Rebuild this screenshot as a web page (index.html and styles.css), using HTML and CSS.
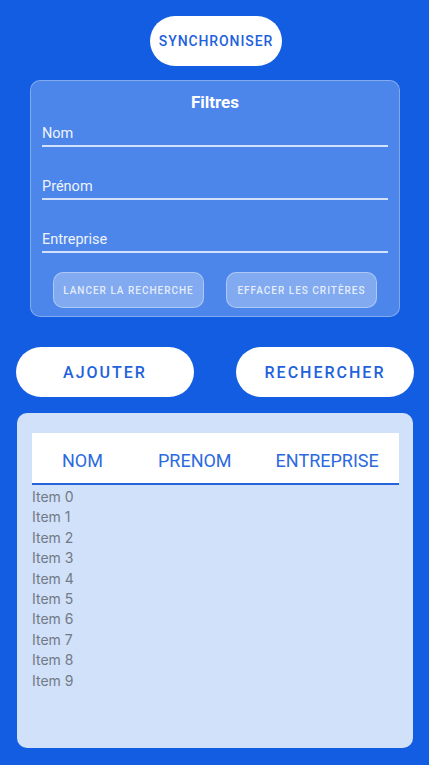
FILE: index.html
```html
<!DOCTYPE html>
<html>
<head>
<meta charset="utf-8">
<link rel="stylesheet" href="styles.css">
</head>
<body>
<div class="page">
  <div class="sync-row"><button class="pill sync">SYNCHRONISER</button></div>
  <section class="filters">
    <h2 class="filters-title">Filtres</h2>
    <div class="field first"><span class="field-label">Nom</span></div>
    <div class="field"><span class="field-label">Prénom</span></div>
    <div class="field"><span class="field-label">Entreprise</span></div>
    <div class="filter-actions">
      <button class="ghost">LANCER LA RECHERCHE</button>
      <button class="ghost">EFFACER LES CRITÈRES</button>
    </div>
  </section>
  <div class="actions">
    <button class="pill big">AJOUTER</button>
    <button class="pill big">RECHERCHER</button>
  </div>
  <section class="list">
    <div class="list-head">
      <span class="col c1">NOM</span>
      <span class="col c2">PRENOM</span>
      <span class="col c3">ENTREPRISE</span>
    </div>
    <ul class="items">
      <li>Item 0</li><li>Item 1</li><li>Item 2</li><li>Item 3</li><li>Item 4</li>
      <li>Item 5</li><li>Item 6</li><li>Item 7</li><li>Item 8</li><li>Item 9</li>
    </ul>
  </section>
</div>
</body>
</html>
```
FILE: styles.css
```css
* { box-sizing: border-box; }
html, body { margin: 0; padding: 0; }
body {
  background: #135de3;
  font-family: Roboto, "Liberation Sans", sans-serif;
  width: 429px;
  height: 765px;
  overflow: hidden;
}
.page { padding-top: 16px; }
button { font-family: inherit; cursor: pointer; }
.sync-row { display: flex; justify-content: center; padding-left: 3px; }
.pill {
  background: #fff;
  border: none;
  color: #1f62dc;
  font-weight: 500;
}
.sync {
  width: 132px;
  height: 50px;
  border-radius: 25px;
  font-size: 14px;
  letter-spacing: 0.9px;
}
.filters {
  margin: 14px 29px 0 30px;
  height: 237px;
  background: #4d86ea;
  border: 1px solid rgba(255,255,255,0.3);
  border-radius: 10px;
  padding: 0 11px;
}
.filters-title {
  margin: 11px 0 0;
  text-align: center;
  color: #fff;
  font-size: 17px;
  font-weight: 700;
  line-height: 20px;
}
.field {
  height: 53px;
  display: flex;
  align-items: flex-end;
  border-bottom: 2px solid rgba(255,255,255,0.75);
  padding-bottom: 2px;
}
.field.first { height: 35px; }
.field-label { color: #eef3fd; font-size: 14.5px; line-height: 18px; }
.filter-actions {
  display: flex;
  justify-content: space-between;
  padding: 0 11px;
  margin-top: 19px;
}
.ghost {
  width: 151px;
  height: 36px;
  border-radius: 10px;
  background: rgba(255,255,255,0.3);
  border: 1px solid rgba(255,255,255,0.35);
  color: rgba(255,255,255,0.8);
  font-size: 10px;
  font-weight: 500;
  letter-spacing: 1px;
}
.actions {
  display: flex;
  justify-content: space-between;
  margin: 30px 15px 0 16px;
}
.big {
  width: 178px;
  height: 50px;
  border-radius: 25px;
  font-size: 16px;
  letter-spacing: 2px;
}
.list {
  margin: 16px 16px 0 17px;
  height: 335px;
  background: #d0e1f9;
  border-radius: 10px;
  padding: 20px 14px 0 15px;
}
.list-head {
  display: flex;
  height: 52px;
  align-items: center;
  background: #fff;
  border-bottom: 2px solid #2463d8;
  padding-left: 30px;
  padding-top: 4px;
}
.col { color: #2c6ade; font-size: 18px; }
.c2 { margin-left: 55px; }
.c3 { margin-left: 44px; }
.items {
  list-style: none;
  margin: 2px 0 0;
  padding: 0;
}
.items li {
  color: #737a86;
  font-family: Inter, Roboto, sans-serif;
  font-size: 14px;
  line-height: 20.4px;
}
```
